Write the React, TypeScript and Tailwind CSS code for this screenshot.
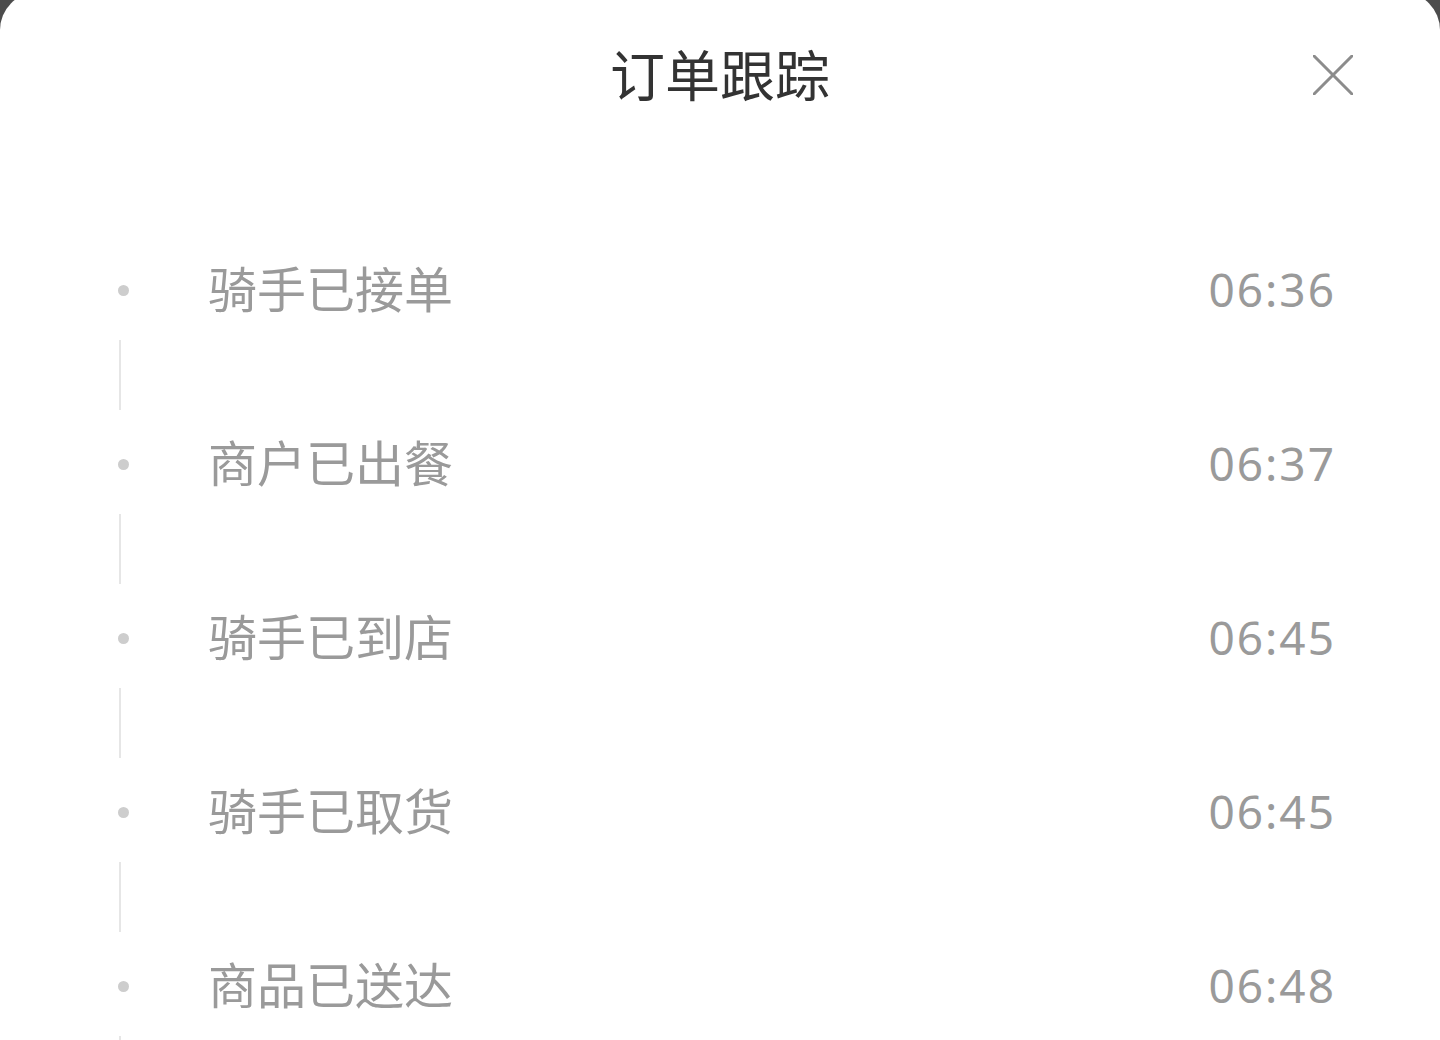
import React from "react";

const steps = [
  { label: "骑手已接单", time: "06:36" },
  { label: "商户已出餐", time: "06:37" },
  { label: "骑手已到店", time: "06:45" },
  { label: "骑手已取货", time: "06:45" },
  { label: "商品已送达", time: "06:48" },
];

const cjk = { fontFamily: '"Noto Sans CJK SC", "Noto Sans", sans-serif' };
const num = { fontFamily: '"Noto Sans", Roboto, sans-serif' };

export default function App() {
  return (
    <div className="h-[1040px] w-[1440px] overflow-hidden bg-[#4c4c4c]">
      <div className="mt-[-8px] h-[1048px] overflow-hidden rounded-t-[38px] bg-white">
        {/* header */}
        <div className="grid h-[160px] grid-cols-[1fr_auto_1fr] items-center">
          <div />
          <h1 className="text-[55px] leading-none text-[#333333]" style={cjk}>
            订单跟踪
          </h1>
          <div className="flex justify-end pr-[87px] pt-[6px]">
            <svg width="40" height="40" viewBox="0 0 40 40" fill="none">
              <path
                d="M1 1 L39 39 M39 1 L1 39"
                stroke="#8c8c8c"
                strokeWidth="3"
                strokeLinecap="round"
              />
            </svg>
          </div>
        </div>

        {/* timeline */}
        <div className="pt-[88px]">
          {steps.map((s) => (
            <div key={s.label} className="mb-1">
              <div className="flex h-[100px] items-center pl-[118px] pr-[104px]">
                <span className="h-[11px] w-[11px] shrink-0 rounded-full bg-[#cdcdcd]" />
                <span
                  className="ml-[79px] pb-[7px] text-[49px] leading-none text-[#9a9a9a]"
                  style={cjk}
                >
                  {s.label}
                </span>
                <span
                  className="ml-auto pb-[2px] text-[46px] leading-none tracking-[2px] text-[#9a9a9a]"
                  style={num}
                >
                  {s.time}
                </span>
              </div>
              <div className="ml-[119px] h-[70px] w-[2px] bg-[#e6e6e6]" />
            </div>
          ))}
        </div>
      </div>
    </div>
  );
}
